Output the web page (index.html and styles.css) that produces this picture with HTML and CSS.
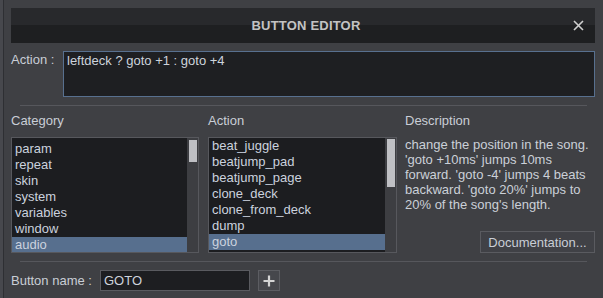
FILE: index.html
```html
<!DOCTYPE html>
<html lang="en">
<head>
    <meta charset="UTF-8">
    <title>Button Editor</title>
    <link rel="stylesheet" href="styles.css">
</head>
<body>
    <div class="window">
        <!-- Title bar -->
        <div class="titlebar">
            <span class="title">BUTTON EDITOR</span>
            <span class="close">
                <svg width="11" height="11" viewBox="0 0 11 11">
                    <path d="M1 1 L10 10 M10 1 L1 10" stroke="#cfcfcf" stroke-width="1.6" fill="none"/>
                </svg>
            </span>
        </div>

        <div class="action-row">
            <span class="label">Action :</span>
            <div class="script-box">leftdeck ? goto +1 : goto +4</div>
        </div>

        <div class="divider"></div>

        <div class="columns">
            <div class="col col-category">
                <div class="col-title">Category</div>
                <div class="listbox">
                    <ul class="items">
                        <li>param</li>
                        <li>repeat</li>
                        <li>skin</li>
                        <li>system</li>
                        <li>variables</li>
                        <li>window</li>
                        <li class="selected">audio</li>
                    </ul>
                    <div class="scrollbar"><div class="thumb thumb-small"></div></div>
                </div>
            </div>
            <div class="col col-action">
                <div class="col-title">Action</div>
                <div class="listbox">
                    <ul class="items items-action">
                        <li>beat_juggle</li>
                        <li>beatjump_pad</li>
                        <li>beatjump_page</li>
                        <li>clone_deck</li>
                        <li>clone_from_deck</li>
                        <li>dump</li>
                        <li class="selected">goto</li>
                    </ul>
                    <div class="scrollbar"><div class="thumb thumb-big"></div></div>
                </div>
            </div>
            <div class="col col-desc">
                <div class="col-title">Description</div>
                <p class="desc">change the position in the song. 'goto +10ms' jumps 10ms forward. 'goto -4' jumps 4 beats backward. 'goto 20%' jumps to 20% of the song's length.</p>
                <button class="doc-button">Documentation...</button>
            </div>
        </div>

        <div class="divider divider-bottom"></div>

        <div class="name-row">
            <span class="label">Button name :</span>
            <div class="name-input">GOTO</div>
            <button class="plus-button">
                <svg width="12" height="12" viewBox="0 0 12 12">
                    <path d="M6 0.5 V11.5 M0.5 6 H11.5" stroke="#d4d4d4" stroke-width="2.2" fill="none"/>
                </svg>
            </button>
        </div>
    </div>
</body>
</html>
```

FILE: styles.css
```css
body {
    margin: 0;
    width: 603px;
    height: 298px;
    overflow: hidden;
    background-color: #3f4044;
    font-family: 'Liberation Sans', Arial, sans-serif;
    font-size: 13px;
    color: #c9ced6;
}

.window {
    height: 298px;
    box-sizing: border-box;
    padding: 8px 8px 0 8px;
    border-left: 3px solid #47484d;
    box-shadow: inset 1px 0 0 #2e2f33;
}

/* Title bar */
.titlebar {
    height: 35px;
    background: linear-gradient(#28292c 0, #28292c 50%, #1e1f21 50%, #1e1f21 100%);
    display: flex;
    align-items: center;
    justify-content: center;
    position: relative;
}

.title {
    font-weight: bold;
    color: #c3c3c3;
    letter-spacing: 0.2px;
    margin-left: 6px;
}

.close {
    position: absolute;
    right: 11px;
    top: 12px;
    width: 11px;
    height: 11px;
    display: flex;
}

/* Action script row */
.action-row {
    display: flex;
    margin-top: 8px;
}

.label {
    width: 52px;
    line-height: 16px;
    padding-top: 1px;
}

.script-box {
    width: 532px;
    height: 46px;
    box-sizing: border-box;
    border: 1px solid #58708f;
    background-color: #1e1f22;
    padding: 1px 3px;
    line-height: 16px;
    color: #cdd3dc;
}

.divider {
    height: 1px;
    background-color: #56575c;
    margin: 8px 8px 0 9px;
}

/* Three columns */
.columns {
    display: flex;
    margin-top: 7px;
}

.col-title {
    line-height: 16px;
    height: 16px;
    margin-bottom: 8px;
}

.col-category {
    width: 188px;
    margin-right: 9px;
}

.col-action {
    width: 189px;
    margin-right: 8px;
}

.col-desc {
    flex: 1;
    display: flex;
    flex-direction: column;
}

.listbox {
    height: 116px;
    box-sizing: border-box;
    border: 1px solid #57585d;
    background-color: #1c1d20;
    display: flex;
}

.items {
    list-style: none;
    margin: 0;
    padding: 3px 0 0 0;
    flex: 1;
    overflow: hidden;
}

.items li {
    height: 16px;
    line-height: 16px;
    padding-left: 3px;
    color: #cbd2de;
}

.items-action {
    padding-top: 0;
}

.items li.selected {
    background-color: #576f8e;
}

.scrollbar {
    width: 11px;
    box-sizing: border-box;
    background-color: #3d3e42;
    padding: 2px 1px 0 2px;
}

.thumb {
    background-color: #bfc0c4;
}

.thumb-small {
    height: 22px;
}

.thumb-big {
    height: 48px;
    margin-top: -1px;
}

.desc {
    margin: 0;
    line-height: 15px;
    color: #cbd0d8;
}

.doc-button {
    margin-top: auto;
    align-self: flex-end;
    width: 115px;
    height: 22px;
    border: 1px solid #5a5b60;
    background-color: #404146;
    color: #c9ced6;
    font-family: 'Liberation Sans', Arial, sans-serif;
    font-size: 13px;
    padding: 0;
}

.divider-bottom {
    margin-top: 8px;
}

/* Button name row */
.name-row {
    display: flex;
    align-items: center;
    margin-top: 8px;
}

.name-row .label {
    width: 89px;
    padding-top: 0;
}

.name-input {
    width: 150px;
    height: 21px;
    box-sizing: border-box;
    border: 1px solid #5a5b60;
    background-color: #1d1e21;
    padding: 0 3px;
    line-height: 19px;
    color: #cdd3dc;
}

.plus-button {
    width: 22px;
    height: 21px;
    margin-left: 8px;
    border: 1px solid #5c5d62;
    background-color: #46474c;
    padding: 0;
    display: flex;
    align-items: center;
    justify-content: center;
}
```
